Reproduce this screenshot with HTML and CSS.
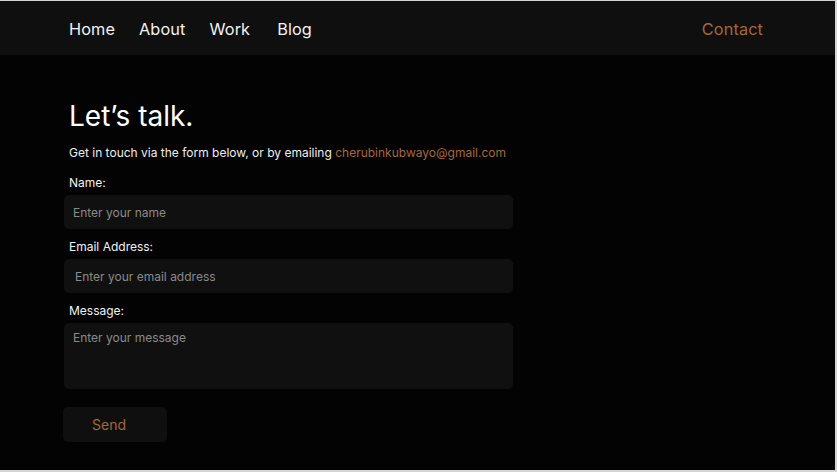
FILE: index.html
```html
<!DOCTYPE html>
<html lang="en">
<head>
<meta charset="utf-8">
<title>Contact</title>
<link rel="stylesheet" href="styles.css">
</head>
<body>
<div class="page">
  <header class="nav">
    <nav class="nav-links">
      <a class="nav-link" href="#">Home</a>
      <a class="nav-link" href="#">About</a>
      <a class="nav-link" href="#">Work</a>
      <a class="nav-link nav-blog" href="#">Blog</a>
    </nav>
    <a class="nav-contact" href="#">Contact</a>
  </header>
  <main class="content">
    <h1 class="title">Let’s talk.</h1>
    <p class="intro">Get in touch via the form below, or by emailing <a class="mail" href="#">cherubinkubwayo@gmail.com</a></p>
    <form class="form">
      <label class="label">Name:</label>
      <div class="field">Enter your name</div>
      <label class="label">Email Address:</label>
      <div class="field field-email">Enter your email address</div>
      <label class="label">Message:</label>
      <div class="field field-area">Enter your message</div>
      <div class="send">Send</div>
    </form>
  </main>
</div>
</body>
</html>
```
FILE: styles.css
```css
html { background: #d4d4d4; }
body {
  margin: 1px 0 0 0;
  font-family: "Inter", "Open Sans", sans-serif;
}
.page {
  width: 835px;
  height: 469px;
  background: #030303;
  color: #fff;
  overflow: hidden;
}
.nav {
  height: 54px;
  background: #0f0f0f;
  display: flex;
  align-items: center;
  justify-content: space-between;
  padding: 2px 72px 0 69px;
  box-sizing: border-box;
}
.nav-links { display: flex; gap: 24px; }
.nav-link, .nav-contact {
  color: #f2f2f2;
  text-decoration: none;
  font-size: 16.3px;
  letter-spacing: 0.1px;
}
.nav-blog { margin-left: 3px; }
.nav-contact { color: #a3683c; }
.content { padding: 44px 0 0 69px; }
.title {
  margin: 0;
  font-weight: 400;
  font-size: 28px;
  line-height: 34px;
  color: #fff;
}
.intro {
  margin: 12px 0 0;
  font-size: 12px;
  color: #eee;
}
.mail { color: #a3683c; text-decoration: none; }
.form { display: flex; flex-direction: column; width: 449px; margin-left: -5px; }
.label { font-size: 12px; color: #f2f2f2; margin: 10px 0 4px 5px; line-height: 16px; }
.label:first-child { margin-top: 15px; }
.field {
  height: 34px;
  background: #101010;
  border-radius: 5px;
  font-size: 12px;
  color: #8a8a8a;
  display: flex;
  align-items: center;
  padding-left: 9px;
}
.field-email { padding-left: 11px; }
.field-area { height: 66px; align-items: flex-start; padding-top: 7px; box-sizing: border-box; }
.send {
  margin-top: 18px;
  width: 104px;
  height: 35px;
  background: #0f0f0f;
  border-radius: 5px;
  color: #a3683c;
  font-size: 14px;
  display: flex;
  align-items: center;
  padding-left: 29px;
  box-sizing: border-box;
  margin-left: -1px;
}
```
